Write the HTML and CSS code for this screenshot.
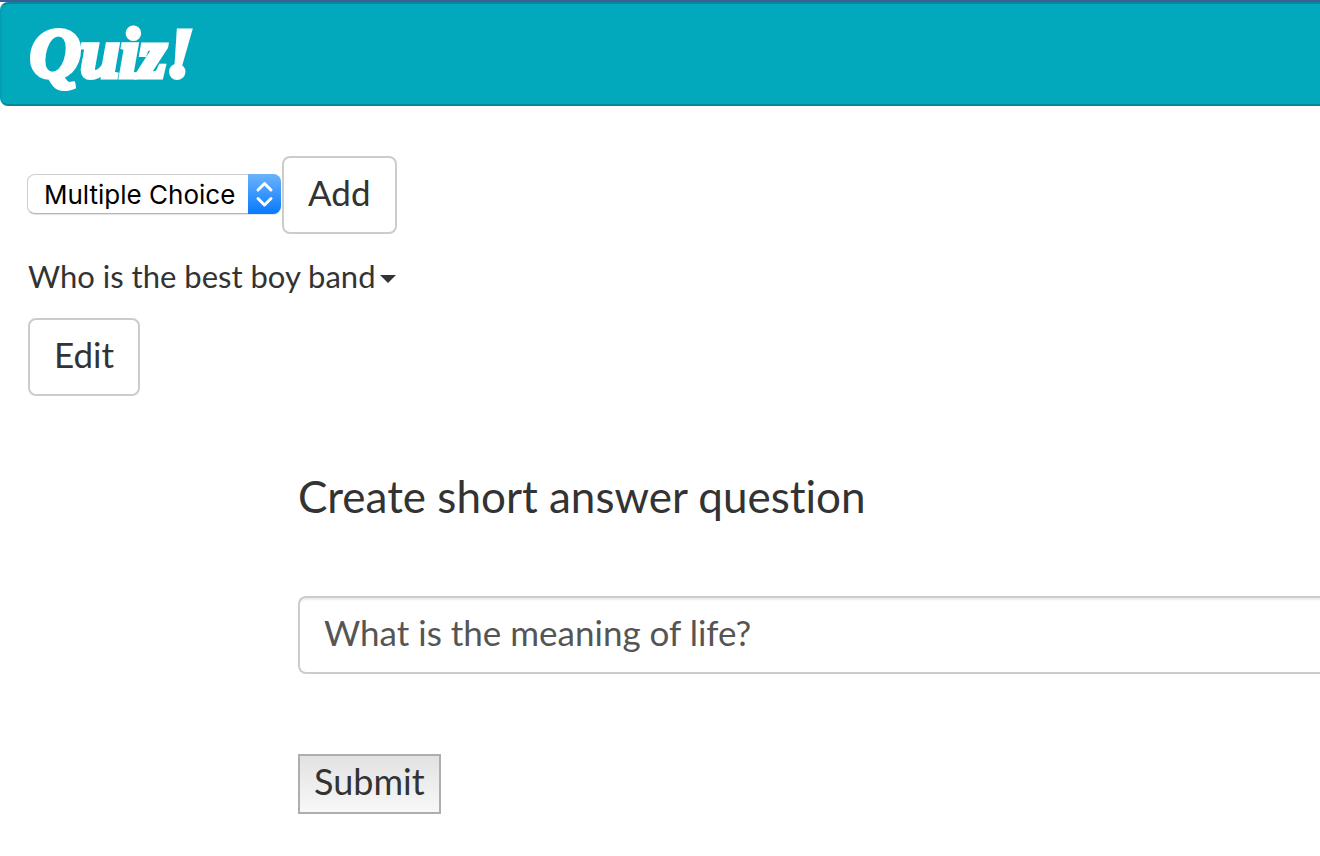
FILE: index.html
```html
<!DOCTYPE html>
<html lang="en">
<head>
<meta charset="utf-8">
<meta name="viewport" content="width=device-width, initial-scale=1">
<title>Quiz!</title>
<link rel="stylesheet" href="styles.css">
</head>
<body>
<header class="navbar"><a class="brand" href="#">Quiz!</a></header>
<main class="content">
  <form class="toolbar">
    <div class="picker">
      <select class="picker-select" aria-label="Question type">
        <option>Multiple Choice</option>
        <option>Short Answer</option>
      </select>
      <svg class="picker-arrows" viewBox="0 0 33 40" aria-hidden="true"><path d="M10 16 16.500 9.500 23 16M10 24.500 16.500 31 23 24.500"/></svg>
    </div>
    <button class="btn" type="button">Add</button>
  </form>
  <button class="question" type="button">Who is the best boy band<span class="caret"></span></button>
  <button class="btn" type="button">Edit</button>
  <form class="editor">
    <h1 class="editor-title">Create short answer question</h1>
    <input class="field" type="text" aria-label="Question" value="What is the meaning of life?">
    <button class="submit" type="button">Submit</button>
  </form>
</main>
</body>
</html>
```
FILE: styles.css
```css
* { box-sizing: border-box; }
body {
  margin: 0;
  border-top: 2px solid #3b5e99;
  background: #fff;
  color: #333;
  font-family: Lato, "Open Sans", sans-serif;
  font-variant-ligatures: none;
}
button, input, select { margin: 0; font: inherit; color: inherit; }
.navbar {
  display: flex;
  align-items: center;
  height: 104px;
  padding-left: 28px;
  background: #02a9bc;
  border: 2px solid #028a99;
  border-right: 0;
  border-left-color: #02a0b1;
  border-radius: 8px 0 0 8px;
}
.brand {
  color: #fff;
  font: italic bold 70px/72px "Liberation Serif", serif;
  -webkit-text-stroke: 5px #fff;
  text-decoration: none;
}
.content {
  display: flex;
  flex-direction: column;
  align-items: flex-start;
  padding: 50px 0 40px 28px;
}
.toolbar { display: flex; align-items: center; gap: 1px; }
.picker { position: relative; margin-left: -1px; padding-bottom: 2px; }
.picker-select {
  display: block;
  width: 254px;
  height: 40px;
  padding: 2px 34px 0 16px;
  appearance: none;
  color: #000;
  font: 26px/36px Inter, Roboto, sans-serif;
  background: #fff;
  border: 1px solid #cfcfcf;
  border-bottom-color: #b5b5b5;
  border-radius: 8px;
  box-shadow: 0 1px 1px #e4e4e4;
}
.picker-arrows {
  position: absolute;
  top: 0;
  right: 0;
  width: 33px;
  height: 40px;
  fill: none;
  stroke: #fff;
  stroke-width: 3;
  stroke-linecap: round;
  stroke-linejoin: round;
  background: linear-gradient(#6cb3fa, #067aff);
  border-radius: 0 8px 8px 0;
  pointer-events: none;
}
.btn {
  height: 78px;
  padding: 0 24px 6px;
  font-size: 35px;
  line-height: 48px;
  background: #fff;
  border: 2px solid #ccc;
  border-radius: 8px;
}
.question {
  display: flex;
  align-items: center;
  gap: 4px;
  margin: 20px 0;
  padding: 0;
  font-size: 31px;
  line-height: 44px;
  background: none;
  border: 0;
}
.caret {
  margin-top: 6px;
  border: 8px solid transparent;
  border-top-color: #333;
  border-bottom: 0;
}
.editor {
  display: flex;
  flex-direction: column;
  align-items: flex-start;
  align-self: stretch;
  margin: 68px 0 0 270px;
}
.editor-title { margin: 0; font-size: 44px; line-height: 64px; font-weight: 400; }
.field {
  width: 100%;
  height: 78px;
  margin: 68px 0 80px;
  padding: 0 24px 6px;
  font-size: 35px;
  color: #555;
  background: #fff;
  border: 2px solid #ccc;
  border-right: 0;
  border-radius: 8px 0 0 8px;
  box-shadow: inset 0 4px 2px -2px #ededed;
}
.submit {
  height: 60px;
  padding: 0 14px 6px;
  font-size: 36px;
  line-height: 48px;
  background: linear-gradient(#e2e2e2, #f8f8f8);
  border: 2px solid #aeaeae;
  border-radius: 0;
}
```
